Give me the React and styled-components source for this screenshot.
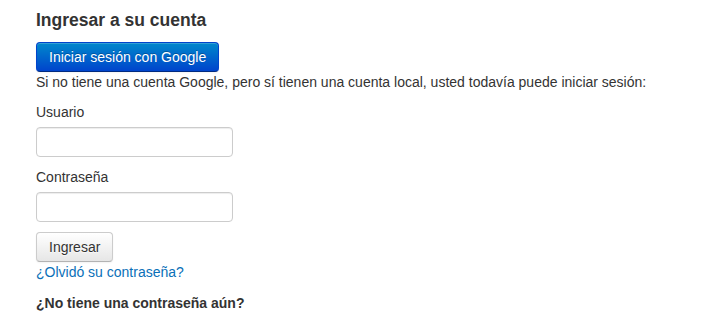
import React from 'react';
import styled, { createGlobalStyle } from 'styled-components';

const GlobalStyle = createGlobalStyle`
    body {
        margin: 0;
        background: #ffffff;
        font-family: 'Liberation Sans', Arial, sans-serif;
        font-size: 14px;
        line-height: 20px;
        color: #333333;
    }
`;

const Page = styled.div`
    padding: 8px 36px 0;
`;

const Heading = styled.h4`
    margin: 0 0 10px;
    font-size: 17.5px;
    line-height: 24px;
    font-weight: bold;
    color: #333333;
`;

const Button = styled.button`
    display: inline-block;
    box-sizing: border-box;
    height: 30px;
    padding: 4px 12px;
    font-family: inherit;
    font-size: 14px;
    line-height: 20px;
    border-radius: 4px;
    cursor: pointer;
    color: ${(props) => (props.primary ? '#ffffff' : '#333333')};
    text-shadow: ${(props) =>
        props.primary ? '0 -1px 0 rgba(0, 0, 0, 0.25)' : '0 1px 1px rgba(255, 255, 255, 0.75)'};
    background-image: ${(props) =>
        props.primary
            ? 'linear-gradient(to bottom, #0088cc, #0044cc)'
            : 'linear-gradient(to bottom, #ffffff, #e6e6e6)'};
    border: 1px solid ${(props) => (props.primary ? '#0044cc' : '#cccccc')};
    border-bottom-color: ${(props) => (props.primary ? '#002a80' : '#b3b3b3')};
    box-shadow: inset 0 1px 0 rgba(255, 255, 255, 0.2), 0 1px 2px rgba(0, 0, 0, 0.05);
`;

const Note = styled.p`
    margin: 0 0 10px;
`;

const Label = styled.label`
    display: block;
    margin-bottom: 5px;
`;

const Input = styled.input`
    display: block;
    box-sizing: border-box;
    width: 197px;
    height: 30px;
    margin: 0 0 10px;
    padding: 4px 6px;
    font-family: inherit;
    font-size: 14px;
    border: 1px solid #cccccc;
    border-radius: 4px;
    box-shadow: inset 0 1px 1px rgba(0, 0, 0, 0.075);
    outline: none;
`;

const Link = styled.a`
    display: block;
    color: #0a70b8;
    text-decoration: none;
`;

const SubHeading = styled.p`
    margin: 11px 0 0;
    font-weight: bold;
`;

export default () => {
    return (
        <Page>
            <GlobalStyle />
            <Heading>Ingresar a su cuenta</Heading>
            <Button primary>Iniciar sesión con Google</Button>
            <Note>
                Si no tiene una cuenta Google, pero sí tienen una cuenta local, usted todavía puede
                iniciar sesión:
            </Note>
            <form onSubmit={(e) => e.preventDefault()}>
                <Label htmlFor="usuario">Usuario</Label>
                <Input id="usuario" type="text" />
                <Label htmlFor="clave">Contraseña</Label>
                <Input id="clave" type="password" />
                <Button type="submit">Ingresar</Button>
                <Link href="#">¿Olvidó su contraseña?</Link>
            </form>
            <SubHeading>¿No tiene una contraseña aún?</SubHeading>
        </Page>
    );
};
